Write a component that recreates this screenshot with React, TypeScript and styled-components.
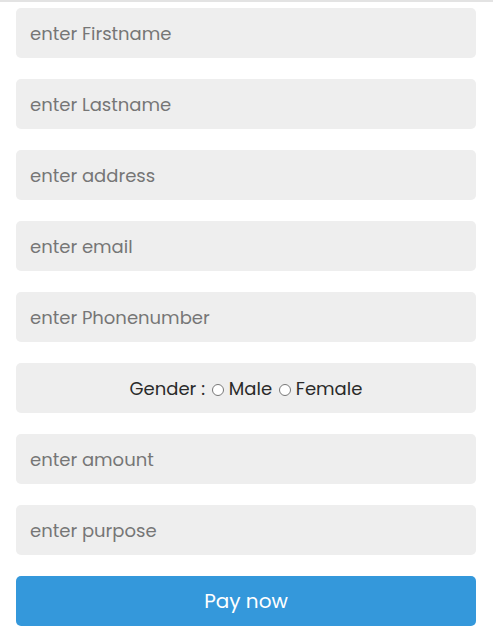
import React from "react";
import styled, { createGlobalStyle } from "styled-components";

const Global = createGlobalStyle`
  html, body { margin: 0; padding: 0; background: #fff; }
  body { font-family: "Poppins", "Open Sans", sans-serif; }
`;

const Page = styled.div`
  border-top: 2px solid #e3e3e3;
  padding: 6px 17px 8px 16px;
  display: flex;
  flex-direction: column;
  gap: 21px;
`;

const Field = styled.input`
  box-sizing: border-box;
  height: 50px;
  width: 100%;
  border: none;
  outline: none;
  border-radius: 5px;
  background: #eeeeee;
  padding: 0 14px;
  font-family: "Poppins", "Open Sans", sans-serif;
  font-size: 18px;
  color: #333;
  &::placeholder { color: #767676; }
`;

const GenderRow = styled.div`
  box-sizing: border-box;
  height: 50px;
  padding-top: 1px;
  line-height: 50px;
  border-radius: 5px;
  background: #eeeeee;
  text-align: center;
  font-size: 18px;
  color: #2a2a2a;
  white-space: nowrap;
`;

const Radio = styled.input`
  margin: 0 5px 0 2px;
  width: 12px;
  height: 12px;
  vertical-align: -1px;
`;

const PayButton = styled.button`
  height: 50px;
  border: none;
  border-radius: 5px;
  background: #3498db;
  color: #fff;
  font-family: "Poppins", "Open Sans", sans-serif;
  font-size: 20px;
  cursor: pointer;
`;

export default function App() {
  const fields = ["Firstname", "Lastname", "address", "email", "Phonenumber"];
  return (
    <>
      <Global />
      <Page>
        {fields.map((f) => (
          <Field key={f} placeholder={`enter ${f}`} />
        ))}
        <GenderRow>
          Gender : <Radio type="radio" name="g" />Male <Radio type="radio" name="g" />Female
        </GenderRow>
        <Field placeholder="enter amount" />
        <Field placeholder="enter purpose" />
        <PayButton>Pay now</PayButton>
      </Page>
    </>
  );
}
